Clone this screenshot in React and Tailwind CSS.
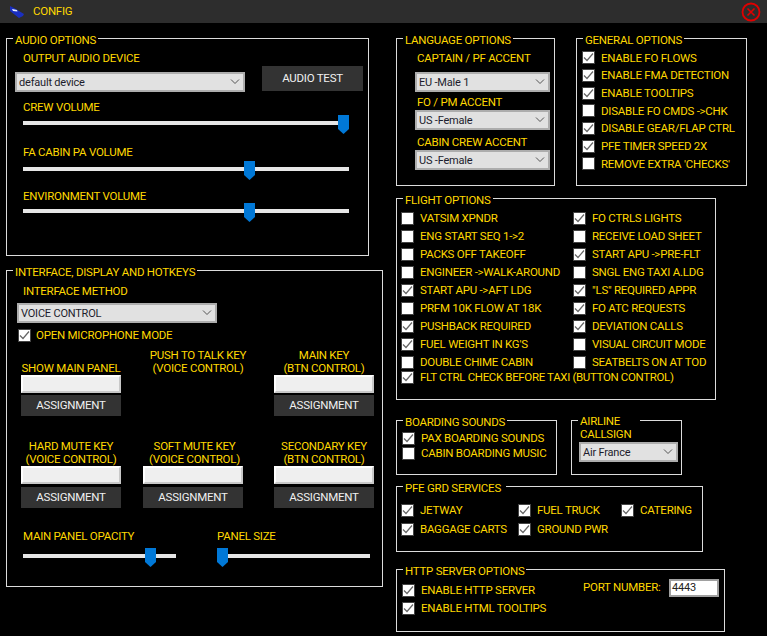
import React from "react";

const Check = ({ on, className = "" }) => (
  <span className={`flex h-[13px] w-[13px] shrink-0 items-center justify-center border border-[#444444] bg-white ${className}`}>
    {on && (
      <svg width="11" height="11" viewBox="0 0 11 11" className="shrink-0">
        <path d="M1 5.5 L4 8.5 L10 1.5" fill="none" stroke="#666666" strokeWidth="1.2" />
      </svg>
    )}
  </span>
);

const Opt = ({ on, children, gap = "gap-[6px]", className = "" }) => (
  <div className={`flex items-center whitespace-nowrap ${gap} ${className}`}>
    <Check on={on} />
    <span className="pt-[1px]">{children}</span>
  </div>
);

const Group = ({ title, width, height, legend = "", className = "", children }) => (
  <div className={`relative shrink-0 border border-[#dcdcdc] ${width} ${height} ${className}`}>
    <div className={`absolute left-[6px] top-[-6px] whitespace-nowrap bg-black px-[2px] leading-[14px] ${legend}`}>{title}</div>
    {children}
  </div>
);

const Label = ({ children, className = "" }) => (
  <div className={`h-[14px] whitespace-nowrap leading-[14px] ${className}`}>{children}</div>
);

const Combo = ({ value, className = "" }) => (
  <div className={`flex h-[20px] items-center justify-between border-2 border-[#adadad] bg-[#e1e1e1] pl-[2px] pr-[3px] text-[11px] tracking-[-0.2px] text-[#1c1c2c] ${className}`}>
    <span className="whitespace-nowrap pt-[2px]">{value}</span>
    <svg width="10" height="6" viewBox="0 0 10 6" className="shrink-0">
      <path d="M1 0.5 L5 4.5 L9 0.5" fill="none" stroke="#555555" strokeWidth="1" />
    </svg>
  </div>
);

const Slider = ({ pos, className = "" }) => (
  <div className={`relative h-[19px] pt-[6px] ${className}`}>
    <div className="h-[4px] bg-[#e6e6e6]" />
    <svg width="11" height="19" viewBox="0 0 11 19" className="absolute top-0" style={{ left: pos }}>
      <polygon points="0,0 11,0 11,14 5.5,19 0,14" fill="#0078d7" />
    </svg>
  </div>
);

const Btn = ({ children, className = "" }) => (
  <div className={`flex items-center justify-center bg-[#333333] pt-[1px] text-[#f0f0f0] ${className}`}>{children}</div>
);

const KeyCell = ({ lines, input = true, labelClass = "", btnMt = "mt-[2px]" }) => (
  <div className="flex w-[100px] flex-col">
    <div className={`flex h-[26px] flex-col items-center justify-end whitespace-nowrap text-center leading-[13px] ${labelClass}`}>
      {lines.map((l) => (
        <span key={l}>{l}</span>
      ))}
    </div>
    {input && (
      <>
        <div className="h-[18px] border-2 border-b-[#c8c8c8] border-l-white border-r-[#c8c8c8] border-t-white bg-[#efefef]" />
        <Btn className={`h-[21px] ${btnMt}`}>ASSIGNMENT</Btn>
      </>
    )}
  </div>
);

const general = [
  ["ENABLE FO FLOWS", true],
  ["ENABLE FMA DETECTION", true],
  ["ENABLE TOOLTIPS", true],
  ["DISABLE FO CMDS ->CHK", false],
  ["DISABLE GEAR/FLAP CTRL", true],
  ["PFE TIMER SPEED 2X", true],
  ["REMOVE EXTRA 'CHECKS'", false],
];

const flight = [
  ["VATSIM XPNDR", false],
  ["FO CTRLS LIGHTS", true],
  ["ENG START SEQ 1->2", false],
  ["RECEIVE LOAD SHEET", false],
  ["PACKS OFF TAKEOFF", false],
  ["START APU ->PRE-FLT", true],
  ["ENGINEER ->WALK-AROUND", false],
  ["SNGL ENG TAXI A.LDG", false],
  ["START APU ->AFT LDG", true],
  ['"LS" REQUIRED APPR', true],
  ["PRFM 10K FLOW AT 18K", false],
  ["FO ATC REQUESTS", true],
  ["PUSHBACK REQUIRED", true],
  ["DEVIATION CALLS", true],
  ["FUEL WEIGHT IN KG'S", true],
  ["VISUAL CIRCUIT MODE", false],
  ["DOUBLE CHIME CABIN", false],
  ["SEATBELTS ON AT TOD", false],
];

export default function App() {
  return (
    <div className="h-[636px] w-[767px] overflow-hidden bg-black text-[11.5px] tracking-[-0.25px] text-[#ffd800] [font-family:Roboto,'Liberation_Sans',sans-serif]">
      <header className="flex h-[23px] items-center justify-between bg-[#2d2d2d] pl-[10px] pr-[6px]">
        <div className="flex items-center gap-[9px]">
          <svg width="14" height="14" viewBox="0 0 14 14">
            <polygon points="0,1 4,3 14,9 13,11 9,13 0,6" fill="#1a2fc0" />
            <polygon points="2,4 7,5 7.5,6.5 3,6" fill="#e8f0ff" />
          </svg>
          <span>CONFIG</span>
        </div>
        <svg width="20" height="20" viewBox="0 0 20 20">
          <circle cx="10" cy="10" r="8.5" fill="none" stroke="#e00000" strokeWidth="1.8" />
          <path d="M6.5 6.5 L13.5 13.5 M13.5 6.5 L6.5 13.5" stroke="#e00000" strokeWidth="1.6" />
        </svg>
      </header>

      <main className="flex pl-[6px] pt-[15px]">
        <div className="flex w-[377px] shrink-0 flex-col gap-[14px]">
          <Group title="AUDIO OPTIONS" width="w-[363px]" height="h-[218px]">
            <div className="flex pt-[12px]">
              <div className="ml-[8px] w-[230px]">
                <Label className="ml-[8px]">OUTPUT AUDIO DEVICE</Label>
                <Combo value="default device" className="mt-[7px]" />
              </div>
              <Btn className="ml-[17px] mt-[15px] h-[25px] w-[101px]">AUDIO TEST</Btn>
            </div>
            <div className="ml-[16px] w-[326px]">
              <Label className="mt-[8px]">CREW VOLUME</Label>
              <Slider pos={315} className="mt-[1px]" />
              <Label className="mt-[11px]">FA CABIN PA VOLUME</Label>
              <Slider pos={221} className="mt-[2px]" />
              <Label className="mt-[9px]">ENVIRONMENT VOLUME</Label>
              <Slider pos={221} />
            </div>
          </Group>

          <Group title="INTERFACE, DISPLAY AND HOTKEYS" width="w-[377px]" height="h-[317px]">
            <Label className="ml-[16px] mt-[13px]">INTERFACE METHOD</Label>
            <Combo value="VOICE CONTROL" className="ml-[10px] mt-[5px] w-[200px]" />
            <Opt on gap="gap-[5px]" className="ml-[11px] mt-[6px] h-[13px]">OPEN MICROPHONE MODE</Opt>
            <div className="ml-[14px] mt-[7px] grid grid-cols-[122px_131px_100px] gap-y-[24px]">
              <KeyCell lines={["SHOW MAIN PANEL"]} />
              <KeyCell lines={["PUSH TO TALK KEY", "(VOICE CONTROL)"]} input={false} labelClass="pl-[10px]" />
              <KeyCell lines={["MAIN KEY", "(BTN CONTROL)"]} />
              <KeyCell lines={["HARD MUTE KEY", "(VOICE CONTROL)"]} btnMt="mt-[3px]" />
              <KeyCell lines={["SOFT MUTE KEY", "(VOICE CONTROL)"]} labelClass="pl-[3px]" btnMt="mt-[3px]" />
              <KeyCell lines={["SECONDARY KEY", "(BTN CONTROL)"]} btnMt="mt-[3px]" />
            </div>
            <div className="ml-[16px] mt-[21px] flex gap-[41px]">
              <div className="w-[153px]">
                <Label>MAIN PANEL OPACITY</Label>
                <Slider pos={122} className="mt-[5px]" />
              </div>
              <div className="w-[153px]">
                <Label>PANEL SIZE</Label>
                <Slider pos={0} className="mt-[5px]" />
              </div>
            </div>
          </Group>
        </div>

        <div className="ml-[13px] flex flex-col">
          <div className="flex gap-[21px]">
            <Group title="LANGUAGE OPTIONS" width="w-[159px]" height="h-[148px]">
              <div className="pt-[12px]">
                <Label className="ml-[20px]">CAPTAIN / PF ACCENT</Label>
                <Combo value="EU -Male 1" className="ml-[18px] mt-[7px] w-[135px]" />
                <Label className="ml-[20px] mt-[3px]">FO / PM ACCENT</Label>
                <Combo value="US -Female" className="ml-[18px] mt-[1px] w-[135px]" />
                <Label className="ml-[20px] mt-[5px]">CABIN CREW ACCENT</Label>
                <Combo value="US -Female" className="ml-[18px] mt-[1px] w-[135px]" />
              </div>
            </Group>
            <Group title="GENERAL OPTIONS" width="w-[171px]" height="h-[148px]">
              <div className="pl-[5px] pt-[10px]">
                {general.map(([t, on]) => (
                  <Opt key={t} on={on} className="h-[17.67px]">{t}</Opt>
                ))}
              </div>
            </Group>
          </div>

          <Group title="FLIGHT OPTIONS" width="w-[320px]" height="h-[202px]" className="mt-[12px]">
            <div className="grid grid-cols-[172px_1fr] pl-[4px] pt-[10px]">
              {flight.map(([t, on]) => (
                <Opt key={t} on={on} className="h-[18px]">{t}</Opt>
              ))}
              <Opt on className="col-span-2 h-[13px] tracking-[-0.35px]">FLT CTRL CHECK BEFORE TAXI (BUTTON CONTROL)</Opt>
            </div>
          </Group>

          <div className="mt-[20px] flex gap-[14px]">
            <Group title="BOARDING SOUNDS" width="w-[161px]" height="h-[55px]">
              <div className="pl-[5px] pt-[10px]">
                <Opt on className="h-[15px]">PAX BOARDING SOUNDS</Opt>
                <Opt on={false} className="h-[15px]">CABIN BOARDING MUSIC</Opt>
              </div>
            </Group>
            <Group
              title={<>AIRLINE<br />CALLSIGN</>}
              width="w-[111px]"
              height="h-[55px]"
              legend="left-[6px] w-[62px] !leading-[13px]"
            >
              <Combo value="Air France" className="ml-[7px] mt-[21px] w-[99px]" />
            </Group>
          </div>

          <Group title="PFE GRD SERVICES" width="w-[307px]" height="h-[66px]" legend="pr-[5px]" className="mt-[11px]">
            <div className="grid grid-cols-[117px_103px_1fr] pl-[4px] pt-[14px]">
              <Opt on className="h-[19px]">JETWAY</Opt>
              <Opt on className="h-[19px]">FUEL TRUCK</Opt>
              <Opt on className="h-[19px]">CATERING</Opt>
              <Opt on className="h-[19px]">BAGGAGE CARTS</Opt>
              <Opt on className="h-[19px]">GROUND PWR</Opt>
            </div>
          </Group>

          <Group title="HTTP SERVER OPTIONS" width="w-[329px]" height="h-[63px]" className="mt-[17px]">
            <div className="flex pl-[5px]">
              <div className="w-[181px] pt-[11px]">
                <Opt on className="h-[18px]">ENABLE HTTP SERVER</Opt>
                <Opt on className="h-[18px]">ENABLE HTML TOOLTIPS</Opt>
              </div>
              <div className="flex items-center self-start pt-[9px]">
                <span className="w-[86px] whitespace-nowrap">PORT NUMBER:</span>
                <div className="flex h-[18px] w-[50px] items-center border-2 border-[#a0a0a0] bg-white pl-[1px] text-[11px] tracking-[-0.2px] text-[#222222]">4443</div>
              </div>
            </div>
          </Group>
        </div>
      </main>
    </div>
  );
}
